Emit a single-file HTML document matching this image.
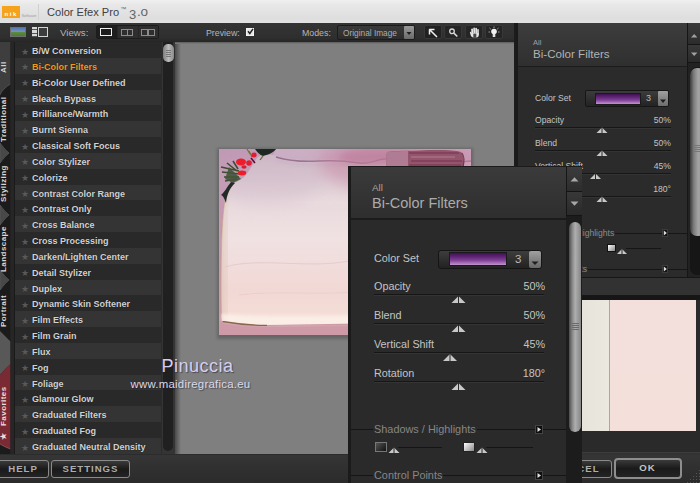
<!DOCTYPE html>
<html><head><meta charset="utf-8">
<style>
*{margin:0;padding:0;box-sizing:border-box}
html,body{width:700px;height:483px;overflow:hidden;background:#2b2b2b;font-family:"Liberation Sans",sans-serif;}
body{position:relative}
.abs{position:absolute}
div,span,svg{position:absolute}
.nw{white-space:nowrap}
/* title */
#title{left:0;top:0;width:700px;height:22.7px;background:linear-gradient(#f0f0f0,#e8e8e8 20%,#e3e3e3 50%,#dedede 78%,#e2e2e2);}
/* toolbar */
#toolbar{left:0;top:22.7px;width:516px;height:19.3px;background:linear-gradient(#343434,#2e2e2e 80%,#262626)}
.tl{font-size:8.8px;color:#b6b6b6;white-space:nowrap;line-height:12px}
/* left */
#tabs{left:0;top:42px;width:15px;height:412px;background:#242424;overflow:hidden}
#list{left:15px;top:42px;width:146.3px;height:412px;background:#2a2a2a;overflow:hidden}
.row{left:0;width:147px;height:15.84px;font-size:9px;font-weight:bold;color:#d2d2d2;line-height:19px;padding-left:17px;white-space:nowrap;text-shadow:0 0 1px #111}
.row.a{background:#292929}
.row.b{background:#343434}
.row .s{left:5.8px;top:1.5px;color:#595959;font-size:8.6px;font-weight:normal;line-height:16px;text-shadow:none}
#lscroll{left:162px;top:42px;width:13px;height:412px;background:#343434}
#preview{left:175.3px;top:41.5px;width:340.7px;height:412.5px;background:#7f7f7f;overflow:hidden}
#right{left:516px;top:23px;width:184px;height:429px;background:#2b2b2b;overflow:hidden}
#bottom{left:0;top:454px;width:700px;height:29px;background:linear-gradient(#363636,#303030 50%,#2b2b2b)}
.vt{font-size:8px;font-weight:bold;color:#d8d8d8;white-space:nowrap;transform-origin:0 0;transform:rotate(-90deg);line-height:11px;height:11px;letter-spacing:0.45px}
.btn{border:1px solid #8a8a8a;border-radius:3px;background:linear-gradient(#3a3a3a,#1a1a1a 50%,#242424);color:#adadad;font-weight:bold;font-size:9.6px;text-align:center;letter-spacing:1px}
/* panel text */
.pl{color:#c4c4c4;white-space:nowrap}
</style></head><body>

<!-- TITLE BAR -->
<div id="title">
  <div style="left:1.7px;top:5.7px;width:18.3px;height:12.2px;background:#f5a31c"></div>
  <div class="nw" style="left:4.5px;top:10.5px;font-size:6px;font-weight:bold;color:#fff;line-height:7px;letter-spacing:1.6px">nik</div>
  <div class="nw" style="left:21.5px;top:12.5px;font-size:4px;color:#a0a0a0;line-height:5px;letter-spacing:-0.1px">Software</div>
  <div style="left:37.5px;top:4px;width:1px;height:16px;background:#d0d0d0"></div>
  <div class="nw" style="left:47px;top:4.7px;font-size:11.1px;color:#404040;line-height:15px">Color Efex Pro<span style="position:relative;font-size:6px;top:-5px;left:1px;color:#666">™</span></div>
  <div class="nw" style="left:129px;top:6.5px;font-size:13px;color:#666;line-height:15px">3</div>
  <div class="nw" style="left:137px;top:3.5px;font-size:13.5px;color:#666;line-height:15px;letter-spacing:-0.3px">.o</div>
</div>

<!-- TOOLBAR -->
<div id="toolbar">
  <!-- icon 1 -->
  <div style="left:10px;top:4px;width:16px;height:10px;border:1px solid #707070;background:linear-gradient(#5878ae 0%,#7492c0 45%,#5c8c40 55%,#4c7c30 100%)"></div>
  <!-- icon 2 -->
  <div style="left:32px;top:4px;width:5px;height:10px;background:repeating-linear-gradient(#d8d8d8 0 2.5px,#555 2.5px 3.5px)"></div>
  <div style="left:38px;top:4px;width:10px;height:10px;border:1.5px solid #d4d4d4;background:#3c3c3c"></div>
  <div class="tl" style="left:60px;top:4px;font-size:9.7px;color:#b2b2b2">Views:</div>
  <!-- view buttons -->
  <div style="left:96px;top:2.5px;width:63px;height:14px;background:#262626;border:1px solid #1c1c1c;border-radius:2px"></div>
  <div style="left:97px;top:3.5px;width:20px;height:12px;background:#1e1e1e"></div>
  <div style="left:118px;top:3.5px;width:20px;height:12px;background:#2e2e2e"></div>
  <div style="left:139px;top:3.5px;width:19px;height:12px;background:#2e2e2e"></div>
  <div style="left:100px;top:5.8px;width:11.5px;height:7.5px;border:1.5px solid #f0f0f0"></div>
  <div style="left:121px;top:6px;width:6.5px;height:7px;border:1px solid #8c8c8c"></div>
  <div style="left:126.5px;top:6px;width:6.5px;height:7px;border:1px solid #8c8c8c"></div>
  <div style="left:141px;top:6px;width:6.5px;height:7px;border:1px solid #8c8c8c"></div>
  <div style="left:148px;top:6px;width:6.5px;height:7px;border:1px solid #8c8c8c"></div>
  <div class="tl" style="left:206px;top:4px">Preview:</div>
  <div style="left:246px;top:5px;width:8px;height:8px;background:#e6e6e6;border:1px solid #f4f4f4"></div>
  <svg style="left:246px;top:4px" width="9" height="9" viewBox="0 0 9 9"><path d="M2 4.2 L3.8 6.5 L7 1.8" stroke="#222" stroke-width="1.5" fill="none"/></svg>
  <div class="tl" style="left:302px;top:4px">Modes:</div>
  <div style="left:337px;top:2px;width:78px;height:15px;background:linear-gradient(#3a3a3a,#2c2c2c);border:1px solid #1c1c1c;border-radius:2px"></div>
  <div class="tl" style="left:343px;top:4px;font-size:8.3px;color:#adadad">Original Image</div>
  <div style="left:404px;top:3px;width:10px;height:13px;background:linear-gradient(#9a9a9a,#6a6a6a);border-radius:1px"></div>
  <svg style="left:404px;top:3px" width="10" height="13"><path d="M2.5 6 L7.5 6 L5 9 Z" fill="#1e1e1e"/></svg>
  <!-- tools -->
  <div style="left:424px;top:2.5px;width:18px;height:14px;background:#212121;border:1px solid #383838;border-radius:2px"></div>
  <div style="left:444.3px;top:2.5px;width:18px;height:14px;background:#252525;border:1px solid #383838;border-radius:2px"></div>
  <div style="left:464.8px;top:2.5px;width:18px;height:14px;background:#252525;border:1px solid #383838;border-radius:2px"></div>
  <div style="left:485.3px;top:2.5px;width:18px;height:14px;background:#252525;border:1px solid #383838;border-radius:2px"></div>
  <svg style="left:424px;top:2px" width="18" height="15"><path d="M5.5 4.5 L13 12 M5.5 4.2 V9.5 M5.2 4.5 H10.5" stroke="#f0f0f0" stroke-width="1.5" fill="none"/></svg>
  <svg style="left:445px;top:2px" width="18" height="15"><circle cx="7" cy="6.3" r="2.3" fill="none" stroke="#d8d8d8" stroke-width="1.3"/><path d="M8.8 8.2 L12.3 11.5" stroke="#d8d8d8" stroke-width="1.6"/></svg>
  <svg style="left:464.8px;top:2px" width="18" height="15"><g fill="#e4e4e4"><rect x="6.3" y="3.5" width="1.7" height="6" rx="0.8"/><rect x="8.3" y="2.6" width="1.7" height="6" rx="0.8"/><rect x="10.3" y="2.8" width="1.7" height="6" rx="0.8"/><rect x="12.2" y="4" width="1.6" height="6" rx="0.8"/><path d="M4.8 7.2 L6.3 6.6 V8 H13.8 V10.5 Q13.5 12.6 11.5 12.6 H8.5 Q6.5 12.6 5.8 10.5 Z"/></g><rect x="8.3" y="8.6" width="3" height="4" fill="#2a2a2a" opacity="0.85"/></svg>
  <svg style="left:485px;top:2px" width="18" height="15"><circle cx="9" cy="6.5" r="2.8" fill="#f0f0f0"/><rect x="7.7" y="9" width="2.6" height="3" fill="#e0e0e0"/><path d="M9 1.5 V3 M4.5 3 L5.8 4.2 M13.5 3 L12.2 4.2 M3.5 7 H5 M13 7 H14.5" stroke="#bbb" stroke-width="0.8"/></svg>
</div>

<!-- LEFT TABS -->
<div id="tabs">
  <svg style="left:0;top:0" width="15" height="413" viewBox="0 0 15 413">
    <rect x="0" y="0" width="10.5" height="413" fill="#1b1b1b"/>
    <!-- All tab (selected) -->
    <path d="M0 0 H10.5 V42 Q7 44 4 47 Q1 50 0 53 Z" fill="#3e3e3e"/>
    <path d="M10.5 42 Q7 44 4 47 Q1 50 0 53" stroke="#555" stroke-width="0.8" fill="none"/>
    <!-- separators (gray wedges) -->
    <path d="M0 101 Q5 108 9 111 Q5 114 0 121 Z" fill="#484848" stroke="#5c5c5c" stroke-width="0.7"/>
    <path d="M0 163 Q5 170 9 173 Q5 176 0 183 Z" fill="#484848" stroke="#5c5c5c" stroke-width="0.7"/>
    <path d="M0 228 Q5 235 9 238 Q5 241 0 248 Z" fill="#484848" stroke="#5c5c5c" stroke-width="0.7"/>
    <!-- big gap between Portrait and Favorites -->
    <path d="M0 289 Q5 294 10.5 299.5 V322 Q5 327 0 333 Z" fill="#585858"/>
    <!-- Favorites -->
    <path d="M10.5 322 V407 Q5 405 0 402 V333 Q5 327 10.5 322 Z" fill="#7a2a33"/><path d="M10.5 407 Q5 405 0 402" stroke="#a06068" stroke-width="0.7" fill="none"/>
    
    <rect x="10.5" y="0" width="4.5" height="413" fill="#262626"/>
    <rect x="14" y="0" width="1" height="413" fill="#1a1a1a"/>
  </svg>
  <div class="vt" id="t1" style="left:-1.6px;top:31px">All</div>
  <div class="vt" id="t2" style="left:-1.6px;top:100px">Traditional</div>
  <div class="vt" id="t3" style="left:-1.6px;top:160px">Stylizing</div>
  <div class="vt" id="t4" style="left:-1.6px;top:230px">Landscape</div>
  <div class="vt" id="t5" style="left:-1.6px;top:284.5px">Portrait</div>
  <div class="vt" id="t6" style="left:-1.6px;top:384px;color:#ecdcdc">Favorites</div>
  <div class="vt" id="t7" style="left:-1.6px;top:397.7px;color:#ecdcdc">★</div>
</div>

<!-- LIST -->
<div id="list">
<div class="row a" style="top:0.00px"><span class="s">★</span>B/W Conversion</div>
<div class="row b" style="top:15.84px;color:#f39a1e"><span class="s">★</span>Bi-Color Filters</div>
<div class="row a" style="top:31.68px"><span class="s">★</span>Bi-Color User Defined</div>
<div class="row b" style="top:47.52px"><span class="s">★</span>Bleach Bypass</div>
<div class="row a" style="top:63.36px"><span class="s">★</span>Brilliance/Warmth</div>
<div class="row b" style="top:79.20px"><span class="s">★</span>Burnt Sienna</div>
<div class="row a" style="top:95.04px"><span class="s">★</span>Classical Soft Focus</div>
<div class="row b" style="top:110.88px"><span class="s">★</span>Color Stylizer</div>
<div class="row a" style="top:126.72px"><span class="s">★</span>Colorize</div>
<div class="row b" style="top:142.56px"><span class="s">★</span>Contrast Color Range</div>
<div class="row a" style="top:158.40px"><span class="s">★</span>Contrast Only</div>
<div class="row b" style="top:174.24px"><span class="s">★</span>Cross Balance</div>
<div class="row a" style="top:190.08px"><span class="s">★</span>Cross Processing</div>
<div class="row b" style="top:205.92px"><span class="s">★</span>Darken/Lighten Center</div>
<div class="row a" style="top:221.76px"><span class="s">★</span>Detail Stylizer</div>
<div class="row b" style="top:237.60px"><span class="s">★</span>Duplex</div>
<div class="row a" style="top:253.44px"><span class="s">★</span>Dynamic Skin Softener</div>
<div class="row b" style="top:269.28px"><span class="s">★</span>Film Effects</div>
<div class="row a" style="top:285.12px"><span class="s">★</span>Film Grain</div>
<div class="row b" style="top:300.96px"><span class="s">★</span>Flux</div>
<div class="row a" style="top:316.80px"><span class="s">★</span>Fog</div>
<div class="row b" style="top:332.64px"><span class="s">★</span>Foliage</div>
<div class="row a" style="top:348.48px"><span class="s">★</span>Glamour Glow</div>
<div class="row b" style="top:364.32px"><span class="s">★</span>Graduated Filters</div>
<div class="row a" style="top:380.16px"><span class="s">★</span>Graduated Fog</div>
<div class="row b" style="top:396.00px"><span class="s">★</span>Graduated Neutral Density</div>
</div>
<div id="lscroll">
  <div style="left:1.3px;top:0px;width:10.2px;height:409px;background:#202020;border-radius:0 0 5px 5px"></div>
  <div style="left:1.2px;top:2.3px;width:10.4px;height:17.8px;border-radius:5px;background:linear-gradient(90deg,#7c7c7c,#bcbcbc 50%,#8a8a8a);box-shadow:0 0 1px #000"></div>
  <div style="left:4px;top:7.5px;width:5px;height:7px;background:repeating-linear-gradient(#777 0 1px,transparent 1px 2px)"></div>
</div>

<!-- PREVIEW -->
<div id="preview">
  <div style="left:0;top:0;width:6px;height:414px;background:linear-gradient(90deg,#4a4a4a,#7f7f7f)"></div>
  <div style="left:0;top:0;width:341px;height:2px;background:linear-gradient(#5a5a5a,#7f7f7f)"></div>
  <!-- shadow -->
  <div style="left:41.7px;top:106.6px;width:256.5px;height:190.5px;background:#666;filter:blur(1.5px)"></div>
  <!-- image -->
  <div id="img" style="left:43.7px;top:107.6px;width:252px;height:186px;overflow:hidden;background:#d0a5b5">
<svg style="left:0;top:0" width="252" height="186" viewBox="0 0 252 186">
  <defs>
    <linearGradient id="gbg" x1="0" y1="0" x2="0" y2="1"><stop offset="0" stop-color="#c098b4"/><stop offset="0.5" stop-color="#c89aae"/><stop offset="1" stop-color="#cf9aa8"/></linearGradient>
    <linearGradient id="gpaper" x1="0" y1="0" x2="0" y2="1"><stop offset="0" stop-color="#d0bcc9"/><stop offset="0.1" stop-color="#d9c7d0"/><stop offset="0.28" stop-color="#e9dbde"/><stop offset="0.5" stop-color="#f0e1e2"/><stop offset="0.8" stop-color="#f2d8d5"/><stop offset="0.92" stop-color="#f4dcd6"/><stop offset="1" stop-color="#f9eae2"/></linearGradient>
    <linearGradient id="gedge" x1="0" y1="0" x2="1" y2="0"><stop offset="0" stop-color="#d8c0a8" stop-opacity="0.5"/><stop offset="1" stop-color="#e8d4d4" stop-opacity="0"/></linearGradient>
    <filter id="b1"><feGaussianBlur stdDeviation="0.7"/></filter>
    <filter id="b2"><feGaussianBlur stdDeviation="1.4"/></filter>
    <filter id="b3"><feGaussianBlur stdDeviation="3"/></filter>
    <filter id="b4" x="-50%" y="-50%" width="200%" height="200%"><feGaussianBlur stdDeviation="8"/></filter>
  </defs>
  <rect width="252" height="186" fill="url(#gbg)"/>
  <!-- top band (bg above paper), slightly lighter -->
  <path d="M57 0 H252 V14 H50 Z" fill="#cfb4c8" opacity="0.85" filter="url(#b1)"/>
  <!-- paper -->
  <path d="M39 8 C35 13 31 21 26 27 C21 32 16 33 12 36 C9 40 7 46 6 52 C4 62 3 80 2.5 100 C2 125 2 150 2.5 165 L3 172 C20 175 40 176.5 60 176 C100 175 140 174.5 180 174 L252 173 V11 C235 13 215 10 195 10 C182 10 175 8 165 9 C155 10 150 15 140 13 C128 11 118 10 100 11 C85 12 70 11 57 7 C50 5 44 5 39 8 Z" fill="url(#gpaper)" filter="url(#b1)"/>
  <ellipse cx="45" cy="28" rx="60" ry="28" fill="#c4a8c0" opacity="0.25" filter="url(#b4)"/>
  <!-- fold line shadow at top of paper -->
  <path d="M57 8 C70 12 85 13 100 12 C118 11 128 12 140 14 C150 16 155 11 165 10 C175 9 182 11 195 11 C215 11 235 14 252 12" stroke="#8a6484" stroke-width="1.5" fill="none" opacity="0.85" filter="url(#b1)"/>
  <path d="M57 11 C70 15 85 16 100 15 C118 14 128 15 140 17 C150 19 155 14 165 13 C175 12 182 14 195 14 C215 14 235 17 252 15" stroke="#c8b0c4" stroke-width="2.5" fill="none" opacity="0.6" filter="url(#b2)"/>
  <!-- left edge tan -->
  <path d="M12 36 C9 40 7 46 6 52 C4 62 3 80 2.5 100 C2 125 2 150 2.5 165 L3 172 L9 173 L9 60 C10 50 13 42 20 32 Z" fill="url(#gedge)" filter="url(#b1)"/>
  <path d="M6 52 C4 62 3 80 2.5 100 C2 125 2 150 2.5 165" stroke="#b89878" stroke-width="0.8" fill="none" opacity="0.6"/>
  <!-- bottom bright band & dark edge -->
  <path d="M3 165 C40 169 120 167 252 165 V173 L180 174 C140 174.5 100 175 60 176 C40 176.5 20 175 3 172 Z" fill="#fbf0e8" opacity="0.85" filter="url(#b2)"/>
  <path d="M3.5 172.5 C15 174.5 30 176.3 48 176.5" stroke="#7a5838" stroke-width="1.3" fill="none" opacity="0.85" filter="url(#b1)"/>
  <path d="M48 176.5 C100 175.5 180 174.8 252 173.8" stroke="#c08c90" stroke-width="1" fill="none" opacity="0.6" filter="url(#b1)"/>
  <!-- subtle creases -->
  <path d="M6 118 C40 108 90 120 130 112 C150 108 165 112 180 110" stroke="#d8bcc4" stroke-width="1" fill="none" opacity="0.55" filter="url(#b1)"/>
  <path d="M20 146 C60 141 100 147 150 142" stroke="#e4c4c2" stroke-width="1" fill="none" opacity="0.5" filter="url(#b1)"/>
  <path d="M60 60 C80 50 110 70 150 55" stroke="#e6d4dc" stroke-width="6" fill="none" opacity="0.35" filter="url(#b3)"/>
  <ellipse cx="185" cy="14" rx="85" ry="30" fill="#c4809e" opacity="0.5" filter="url(#b4)"/>
  <ellipse cx="160" cy="8" rx="40" ry="8" fill="#b87090" opacity="0.45" filter="url(#b3)"/>
  <!-- brush stroke top right -->
  <g filter="url(#b1)">
    <path d="M168 3 C180 1 190 2 200 1.5 C220 0.5 235 1 242 3 C246 6 245 20 244 30 H170 C168 22 166 12 168 3 Z" fill="#93546c"/>
    <path d="M168 3 C175 2 182 2 189 2 V30 H170 C168 22 166 12 168 3 Z" fill="#b88aa0" opacity="0.75"/>
    <path d="M190 4 H240 M192 12 H243 M190 16 H242" stroke="#7e3c54" stroke-width="2" opacity="0.7"/>
    <path d="M192 8 H236" stroke="#b88498" stroke-width="1.2" opacity="0.8"/>
    <path d="M243 4 C246 8 245 14 244 18" stroke="#6a2c44" stroke-width="1.2" fill="none" opacity="0.8"/>
  </g>
  <!-- holly -->
  <g filter="url(#b1)">
    <path d="M36 0 H57 C54 4 48 6 44 7 C41 6 38 3 36 0 Z" fill="#1a2a20"/>
    <path d="M44 7 L41 11" stroke="#5a6a30" stroke-width="1.2"/>
    <path d="M2 18 L20 22 M3 23 L21 25 M5 28 L20 28 M8 14 L18 22 M14 12 L19 20 M6 32 L18 30" stroke="#3c4e30" stroke-width="1.6"/>
    <path d="M10 18 L22 30 L14 34 L6 30 Z" fill="#44553a" opacity="0.9"/>
    <path d="M12 33 C8 38 5 44 2 46 C5 47 6 52 7 54 C8 46 10 40 16 34 Z" fill="#222c28"/>
    <path d="M30 2 L33 8 M28 0 L31 5" stroke="#6a7a38" stroke-width="1.3"/>
    <ellipse cx="22" cy="13" rx="5" ry="3.4" fill="#ee1c2c"/>
    <ellipse cx="30" cy="14" rx="2.8" ry="2.8" fill="#e21c30"/>
    <ellipse cx="35" cy="6" rx="2.6" ry="2.4" fill="#e21c30"/>
    <ellipse cx="23" cy="24" rx="4.2" ry="2.4" fill="#ee1c2c"/>
    <ellipse cx="25" cy="18" rx="2.6" ry="1.8" fill="#d81c30"/>
    <path d="M32 9 L36 14" stroke="#5a1030" stroke-width="1.5"/>
  </g>
</svg>
  </div>
</div>

<!-- RIGHT PANEL -->
<div id="right">
  <div style="left:0;top:0;width:171px;height:44px;background:linear-gradient(#3d3d3d,#2f2f2f)"></div>
  <div style="left:0;top:43px;width:171px;height:1px;background:#1c1c1c"></div>
  <div style="left:0;top:0;width:2px;height:432px;background:#1a1a1a"></div>
  <div class="pl" style="left:17px;top:15px;font-size:7.5px;line-height:9px;color:#a0a0a0">All</div>
  <div class="pl" style="left:17px;top:24px;font-size:11.6px;line-height:14px;color:#b2b2b2">Bi-Color Filters</div>
  <!-- scroll column -->
  <div style="left:171px;top:0;width:13px;height:432px;background:#222"></div>
  <div style="left:171px;top:0;width:1px;height:432px;background:#161616"></div>
  <div style="left:171px;top:0;width:13px;height:21.5px;background:linear-gradient(#3a3a3a,#2c2c2c);border-bottom:1px solid #151515;border-left:1px solid #161616"></div>
  <div style="left:171px;top:21.5px;width:13px;height:18px;background:linear-gradient(#383838,#2a2a2a);border-bottom:1px solid #151515;border-left:1px solid #161616"></div>
  <svg style="left:171px;top:0" width="13" height="40"><path d="M4 14.5 L7.2 11 L10.4 14.5 Z" fill="#a0a0a0"/><path d="M4 29.5 L10.4 29.5 L7.2 33 Z" fill="#a0a0a0"/></svg>
  <div style="left:173.6px;top:44px;width:15px;height:208px;border-radius:7px;background:#161616"></div>
  <div style="left:173.6px;top:45px;width:15px;height:168px;border-radius:7px;background:linear-gradient(90deg,#3a3a3a,#7c7c7c 25%,#a4a4a4 55%,#8c8c8c)"></div>
  <div style="left:177px;top:122px;width:7px;height:7px;background:repeating-linear-gradient(#777 0 1px,transparent 1px 2px)"></div>
  <!-- Color set -->
  <div class="pl" style="left:19px;top:70px;font-size:8.6px;line-height:11px">Color Set</div>
  <div style="left:69px;top:67px;width:84px;height:17px;background:linear-gradient(#3c3c3c,#232323);border:1px solid #161616;border-radius:2px"></div>
  <div style="left:79px;top:70px;width:46px;height:11.5px;background:linear-gradient(#3c1250,#5e2474 30%,#7e3e96 60%,#c294cc);border:1px solid #1a1a1a"></div>
  <div class="pl" style="left:130px;top:70px;font-size:9px;line-height:11px;color:#bbb">3</div>
  <div style="left:142px;top:68px;width:10px;height:15px;background:linear-gradient(#a0a0a0,#6c6c6c);border-radius:1px"></div>
  <svg style="left:142px;top:68px" width="10" height="15"><path d="M2 8.5 L8 8.5 L5 12 Z" fill="#1e1e1e"/></svg>
  <!-- sliders -->
  <div class="pl" style="left:19px;top:92px;font-size:8.6px;line-height:11px">Opacity</div>
  <div class="pl" style="right:29px;top:92px;font-size:8.6px;line-height:11px">50%</div>
  <div style="left:19px;top:104px;width:136px;height:2px;background:linear-gradient(#171717 50%,#333 50%)"></div>
  <div class="pl" style="left:19px;top:115px;font-size:8.6px;line-height:11px">Blend</div>
  <div class="pl" style="right:29px;top:115px;font-size:8.6px;line-height:11px">50%</div>
  <div style="left:19px;top:127px;width:136px;height:2px;background:linear-gradient(#171717 50%,#333 50%)"></div>
  <div class="pl" style="left:19px;top:138px;font-size:8.6px;line-height:11px">Vertical Shift</div>
  <div class="pl" style="right:29px;top:138px;font-size:8.6px;line-height:11px">45%</div>
  <div style="left:19px;top:150px;width:136px;height:2px;background:linear-gradient(#171717 50%,#333 50%)"></div>
  <div class="pl" style="left:19px;top:161px;font-size:8.6px;line-height:11px">Rotation</div>
  <div class="pl" style="right:29px;top:161px;font-size:8.6px;line-height:11px">180°</div>
  <div style="left:19px;top:173px;width:136px;height:2px;background:linear-gradient(#171717 50%,#333 50%)"></div>
  <svg style="left:0;top:0" width="184" height="300">
    <g fill="#c8c8c8"><path d="M80.5 110 L86 104.5 L91.5 110 Z"/><path d="M80.5 133 L86 127.5 L91.5 133 Z"/><path d="M74 156 L79.5 150.5 L85 156 Z"/><path d="M80.5 179 L86 173.5 L91.5 179 Z"/></g>
    <g stroke="#2b2b2b" stroke-width="1"><path d="M86 104 V110 M86 127 V133 M79.5 150 V156 M86 173 V179"/></g>
  </svg>
  <!-- shadows/highlights -->
  <div style="left:2px;top:210px;width:169px;height:1px;background:#161616"></div>
  <div class="pl" style="left:17px;top:205px;font-size:8.6px;line-height:11px;color:#8c8c8c;background:#2b2b2b;padding:0 1px">Shadows / Highlights</div>
  <div style="left:146px;top:206px;width:6px;height:8px;background:#111;border:1px solid #3c3c3c"></div>
  <svg style="left:146px;top:206px" width="6" height="8"><path d="M1.8 1.5 L4.8 4 L1.8 6.5 Z" fill="#ddd"/></svg>
  <div style="left:20px;top:221px;width:9px;height:8px;background:linear-gradient(135deg,#555,#111);border:1px solid #666"></div>
  <div style="left:91px;top:221px;width:9px;height:8px;background:linear-gradient(135deg,#fff,#888);border:1px solid #111"></div>
  <svg style="left:100px;top:224px" width="12" height="8"><path d="M1 7 L6 2 L11 7 Z" fill="#c8c8c8"/><path d="M6 1 V7" stroke="#2b2b2b"/></svg>
  <div style="left:110px;top:225px;width:35px;height:1px;background:#161616"></div>
  <div style="left:2px;top:246px;width:169px;height:1px;background:#161616"></div>
  <div class="pl" style="left:16px;top:241px;font-size:8.6px;line-height:11px;color:#8c8c8c;background:#2b2b2b;padding:0 1px">Control Points</div>
  <div style="left:146px;top:242px;width:6px;height:8px;background:#111;border:1px solid #3c3c3c"></div>
  <svg style="left:146px;top:242px" width="6" height="8"><path d="M1.8 1.5 L4.8 4 L1.8 6.5 Z" fill="#ddd"/></svg>
  <!-- bottom thumbnail area -->
  <div style="left:0;top:254px;width:184px;height:1px;background:#161616"></div>
  <div style="left:0;top:255px;width:184px;height:18px;background:#323232"></div>
  <div style="left:0;top:272px;width:184px;height:160px;background:#2a2a2a"></div>
  <div style="left:0;top:272px;width:184px;height:5px;background:#161616"></div>
  <div style="left:40px;top:277px;width:139.7px;height:131px;background:linear-gradient(#f3e0dc,#f4dfda)"></div>
  <div style="left:40px;top:277px;width:53px;height:131px;background:linear-gradient(90deg,#e2dfd6,#ebe8df)"></div>
  <div style="left:93px;top:277px;width:1.2px;height:131px;background:#f98484"></div>
</div>

<div style="left:514.4px;top:22.7px;width:2px;height:429.5px;background:#1c1c1c"></div>
<!-- BOTTOM BAR -->
<div id="bottom">
  <div style="left:516px;top:-2px;width:184px;height:3px;background:#333;border-top:1px solid #3c3c3c"></div>
  <div style="left:0;top:0;width:516px;height:1px;background:#2c2c2c"></div>
  <div class="btn" style="left:-3px;top:5.5px;width:52px;height:18.5px;line-height:16px">HELP</div>
  <div class="btn" style="left:51px;top:5.5px;width:79px;height:18.5px;line-height:16px">SETTINGS</div>
  <div class="btn" style="left:540px;top:5.5px;width:72px;height:18.5px;line-height:16px;text-align:right;padding-right:11.5px">CANCEL</div>
  <div class="btn" style="left:613.5px;top:4px;width:68px;height:20.5px;line-height:16.5px;border:2px solid #8e8e8e;border-radius:4px;color:#c4c4c4">OK</div>
  <div style="left:686px;top:15px;width:14px;height:14px;background:radial-gradient(circle,#555 0.7px,transparent 0.9px) 0 0/3px 3px;clip-path:polygon(100% 0,100% 100%,0 100%)"></div>
  
</div>

<!-- watermark -->
<div id="wm1" class="nw" style="left:161.5px;top:354.5px;font-size:18px;line-height:22px;color:#d6cef0;letter-spacing:0.5px;text-shadow:1px 1px 1px rgba(30,30,40,.55)">Pinuccia</div>
<div id="wm2" class="nw" style="left:130.5px;top:376.5px;font-size:11.4px;line-height:14px;color:#dcd8ea;letter-spacing:0.25px;text-shadow:1px 1px 1px rgba(30,30,40,.55)">www.maidiregrafica.eu</div>
<!-- POPUP -->
<div id="popup" style="left:348px;top:166px;width:233.5px;height:317px;background:#2a2a2a;overflow:hidden">
  <div style="left:0;top:0;width:218px;height:53px;background:linear-gradient(#3b3b3b,#2e2e2e)"></div>
  <div style="left:0;top:52px;width:218px;height:1.5px;background:#1b1b1b"></div>
  <div style="left:0;top:0;width:3px;height:317px;background:#1b1b1b"></div>
  <div style="left:0;top:0;width:235px;height:1px;background:#1b1b1b"></div>
  <div class="pl" style="left:24px;top:16px;font-size:9.8px;line-height:11px;color:#a4a4a4">All</div>
  <div class="pl" style="left:24px;top:29px;font-size:14.5px;line-height:17px;color:#ababab">Bi-Color Filters</div>
  <!-- scroll column -->
  <div style="left:218px;top:0;width:17px;height:317px;background:#1c1c1c"></div>
  <div style="left:218px;top:1px;width:17px;height:25px;background:linear-gradient(#3c3c3c,#2d2d2d);border-bottom:1px solid #141414;border-left:1px solid #161616"></div>
  <div style="left:218px;top:26px;width:17px;height:23.5px;background:linear-gradient(#383838,#2a2a2a);border-bottom:1px solid #141414;border-left:1px solid #161616"></div>
  <svg style="left:218px;top:0" width="17" height="48"><path d="M4.5 15.5 L8.5 11.3 L12.5 15.5 Z" fill="#a8a8a8"/><path d="M4.5 35.5 L12.5 35.5 L8.5 39.7 Z" fill="#a8a8a8"/></svg>
  <div style="left:221px;top:56px;width:12px;height:210px;border-radius:6px;background:linear-gradient(90deg,#4c4c4c,#8c8c8c 30%,#aeaeae 52%,#868686)"></div>
  <div style="left:223.5px;top:157px;width:7px;height:8px;background:repeating-linear-gradient(#6a6a6a 0 1px,transparent 1px 2px)"></div>
  <!-- Color set -->
  <div class="pl" style="left:26px;top:86px;font-size:10.8px;line-height:13px">Color Set</div>
  <div style="left:90px;top:83.5px;width:104px;height:19px;background:linear-gradient(#3d3d3d,#222);border:1px solid #151515;border-radius:3px"></div>
  <div style="left:101px;top:86px;width:58px;height:14px;background:linear-gradient(#3c1250,#5e2474 30%,#7e3e96 60%,#c294cc);border:1px solid #1a1a1a"></div>
  <div class="pl" style="left:167px;top:86.5px;font-size:11.5px;line-height:13px;color:#bdbdbd">3</div>
  <div style="left:181px;top:84.5px;width:12px;height:17.5px;background:linear-gradient(#a0a0a0,#686868);border-radius:2px"></div>
  <svg style="left:181px;top:84px" width="13" height="19"><path d="M2.5 11.5 L9.5 11.5 L6 15 Z" fill="#1e1e1e"/></svg>
  <!-- sliders -->
  <div class="pl" style="left:26px;top:114px;font-size:10.8px;line-height:13px">Opacity</div>
  <div class="pl" style="right:36.5px;top:114px;font-size:10.8px;line-height:13px">50%</div>
  <div style="left:26px;top:128px;width:170px;height:2px;background:linear-gradient(#161616 50%,#343434 50%)"></div>
  <div class="pl" style="left:26px;top:143px;font-size:10.8px;line-height:13px">Blend</div>
  <div class="pl" style="right:36.5px;top:143px;font-size:10.8px;line-height:13px">50%</div>
  <div style="left:26px;top:157px;width:170px;height:2px;background:linear-gradient(#161616 50%,#343434 50%)"></div>
  <div class="pl" style="left:26px;top:172px;font-size:10.8px;line-height:13px">Vertical Shift</div>
  <div class="pl" style="right:36.5px;top:172px;font-size:10.8px;line-height:13px">45%</div>
  <div style="left:26px;top:186px;width:170px;height:2px;background:linear-gradient(#161616 50%,#343434 50%)"></div>
  <div class="pl" style="left:26px;top:201px;font-size:10.8px;line-height:13px">Rotation</div>
  <div class="pl" style="right:36.5px;top:201px;font-size:10.8px;line-height:13px">180°</div>
  <div style="left:26px;top:215px;width:170px;height:2px;background:linear-gradient(#161616 50%,#343434 50%)"></div>
  <svg style="left:0;top:0" width="235" height="317">
    <g fill="#c8c8c8"><path d="M103.5 137 L110.5 130 L117.5 137 Z"/><path d="M103.5 166 L110.5 159 L117.5 166 Z"/><path d="M95 195 L102 188 L109 195 Z"/><path d="M103.5 224 L110.5 217 L117.5 224 Z"/></g>
    <g stroke="#2a2a2a" stroke-width="1"><path d="M110.5 129 V137 M110.5 158 V166 M102 187 V195 M110.5 216 V224"/></g>
  </svg>
  <!-- shadows/highlights -->
  <div style="left:3px;top:263px;width:215px;height:1px;background:#151515"></div>
  <div class="pl" style="left:25px;top:257px;font-size:10.9px;line-height:13px;color:#868686;background:#2a2a2a;padding:0 1px">Shadows / Highlights</div>
  <div style="left:187px;top:258.5px;width:8px;height:9px;background:#0e0e0e;border:1px solid #444"></div>
  <svg style="left:187px;top:258.5px" width="8" height="9"><path d="M2.5 2 L6 4.5 L2.5 7 Z" fill="#e0e0e0"/></svg>
  <div style="left:27px;top:276px;width:12px;height:10px;background:linear-gradient(135deg,#555,#111);border:1px solid #777"></div>
  <svg style="left:39px;top:279px" width="14" height="9"><path d="M1.5 8 L7 2.5 L12.5 8 Z" fill="#c8c8c8"/><path d="M7 1 V8" stroke="#2a2a2a"/></svg>
  <div style="left:50px;top:281px;width:44px;height:1px;background:#151515"></div>
  <div style="left:115px;top:276px;width:12px;height:10px;background:linear-gradient(135deg,#fff,#888);border:1px solid #222"></div>
  <svg style="left:127px;top:279px" width="14" height="9"><path d="M1.5 8 L7 2.5 L12.5 8 Z" fill="#c8c8c8"/><path d="M7 1 V8" stroke="#2a2a2a"/></svg>
  <div style="left:138px;top:281px;width:47px;height:1px;background:#151515"></div>
  <div style="left:3px;top:309px;width:215px;height:1px;background:#151515"></div>
  <div class="pl" style="left:25px;top:303px;font-size:10.9px;line-height:13px;color:#868686;background:#2a2a2a;padding:0 1px">Control Points</div>
  <div style="left:187px;top:304.5px;width:8px;height:9px;background:#0e0e0e;border:1px solid #444"></div>
  <svg style="left:187px;top:304.5px" width="8" height="9"><path d="M2.5 2 L6 4.5 L2.5 7 Z" fill="#e0e0e0"/></svg>
</div>
</body></html>
